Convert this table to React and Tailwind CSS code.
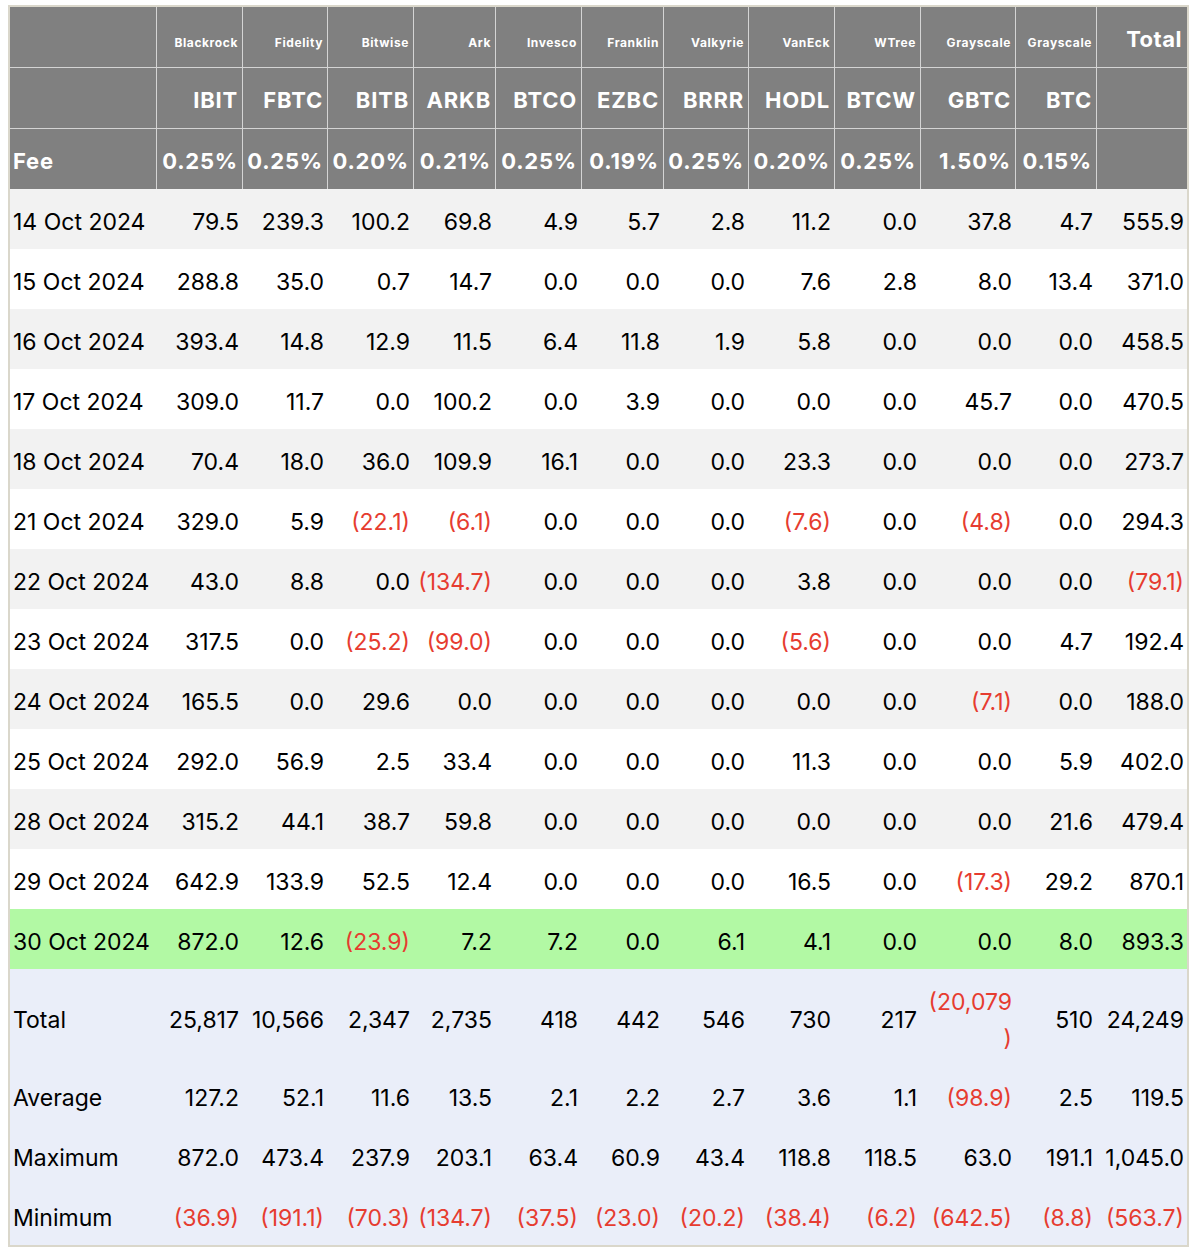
const cols = "grid grid-cols-[146px_85px_84px_85px_81px_85px_81px_84px_85px_85px_94px_80px_90px] gap-x-px";

const issuers = ["Blackrock", "Fidelity", "Bitwise", "Ark", "Invesco", "Franklin", "Valkyrie", "VanEck", "WTree", "Grayscale", "Grayscale"];
const tickers = ["IBIT", "FBTC", "BITB", "ARKB", "BTCO", "EZBC", "BRRR", "HODL", "BTCW", "GBTC", "BTC"];
const fees = ["0.25%", "0.25%", "0.20%", "0.21%", "0.25%", "0.19%", "0.25%", "0.20%", "0.25%", "1.50%", "0.15%"];

const rows = [
  ["14 Oct 2024", "79.5", "239.3", "100.2", "69.8", "4.9", "5.7", "2.8", "11.2", "0.0", "37.8", "4.7", "555.9"],
  ["15 Oct 2024", "288.8", "35.0", "0.7", "14.7", "0.0", "0.0", "0.0", "7.6", "2.8", "8.0", "13.4", "371.0"],
  ["16 Oct 2024", "393.4", "14.8", "12.9", "11.5", "6.4", "11.8", "1.9", "5.8", "0.0", "0.0", "0.0", "458.5"],
  ["17 Oct 2024", "309.0", "11.7", "0.0", "100.2", "0.0", "3.9", "0.0", "0.0", "0.0", "45.7", "0.0", "470.5"],
  ["18 Oct 2024", "70.4", "18.0", "36.0", "109.9", "16.1", "0.0", "0.0", "23.3", "0.0", "0.0", "0.0", "273.7"],
  ["21 Oct 2024", "329.0", "5.9", "(22.1)", "(6.1)", "0.0", "0.0", "0.0", "(7.6)", "0.0", "(4.8)", "0.0", "294.3"],
  ["22 Oct 2024", "43.0", "8.8", "0.0", "(134.7)", "0.0", "0.0", "0.0", "3.8", "0.0", "0.0", "0.0", "(79.1)"],
  ["23 Oct 2024", "317.5", "0.0", "(25.2)", "(99.0)", "0.0", "0.0", "0.0", "(5.6)", "0.0", "0.0", "4.7", "192.4"],
  ["24 Oct 2024", "165.5", "0.0", "29.6", "0.0", "0.0", "0.0", "0.0", "0.0", "0.0", "(7.1)", "0.0", "188.0"],
  ["25 Oct 2024", "292.0", "56.9", "2.5", "33.4", "0.0", "0.0", "0.0", "11.3", "0.0", "0.0", "5.9", "402.0"],
  ["28 Oct 2024", "315.2", "44.1", "38.7", "59.8", "0.0", "0.0", "0.0", "0.0", "0.0", "0.0", "21.6", "479.4"],
  ["29 Oct 2024", "642.9", "133.9", "52.5", "12.4", "0.0", "0.0", "0.0", "16.5", "0.0", "(17.3)", "29.2", "870.1"],
  ["30 Oct 2024", "872.0", "12.6", "(23.9)", "7.2", "7.2", "0.0", "6.1", "4.1", "0.0", "0.0", "8.0", "893.3"],
];

const summary = [
  ["Total", "25,817", "10,566", "2,347", "2,735", "418", "442", "546", "730", "217", "(20,079)", "510", "24,249"],
  ["Average", "127.2", "52.1", "11.6", "13.5", "2.1", "2.2", "2.7", "3.6", "1.1", "(98.9)", "2.5", "119.5"],
  ["Maximum", "872.0", "473.4", "237.9", "203.1", "63.4", "60.9", "43.4", "118.8", "118.5", "63.0", "191.1", "1,045.0"],
  ["Minimum", "(36.9)", "(191.1)", "(70.3)", "(134.7)", "(37.5)", "(23.0)", "(20.2)", "(38.4)", "(6.2)", "(642.5)", "(8.8)", "(563.7)"],
];

function Value({ v }) {
  const neg = v.startsWith("(");
  // the big GBTC total wraps in the original
  if (v === "(20,079)") {
    return (
      <span className="text-right text-[#e63c30]">
        (20,079
        <br />)
      </span>
    );
  }
  return <span className={neg ? "text-[#e63c30]" : ""}>{v}</span>;
}

function Row({ cells, bg, tall }) {
  return (
    <div className={`${cols} ${bg} ${tall ? "h-[96px]" : "h-[60px]"}`}>
      {cells.map((c, i) =>
        i === 0 ? (
          <div key={i} className="flex items-center pl-[3px] pt-[6px]">
            {c}
          </div>
        ) : (
          <div key={i} className="flex items-center justify-end pr-[3px] pt-[6px] leading-[36px]">
            <Value v={c} />
          </div>
        )
      )}
    </div>
  );
}

export default function App() {
  return (
    <div className="bg-white min-h-[1258px] pt-[5px] pl-[8px]">
      <div
        className="w-[1181px] border-2 border-[#dad7cb] text-[22px] text-black"
        style={{ fontFamily: "Inter, 'Liberation Sans', sans-serif" }}
      >
        {/* header block */}
        <div className={`${cols} gap-y-px bg-[#d4d4d4] text-white font-bold`}>
          <div className="h-[60px] bg-[#808080]" />
          {issuers.map((n, i) => (
            <div key={i} className="h-[60px] bg-[#808080] flex items-end justify-end pr-[4px] pb-[18px] text-[12px] leading-none tracking-[0.6px]">
              {n}
            </div>
          ))}
          <div className="h-[60px] bg-[#808080] flex items-end justify-end pr-[5px] pb-[17px] leading-none tracking-[0.5px]">
            Total
          </div>

          <div className="h-[60px] bg-[#808080]" />
          {tickers.map((t) => (
            <div key={t} className="h-[60px] bg-[#808080] flex items-center justify-end pr-[4px] pt-1 tracking-[0.8px]">
              {t}
            </div>
          ))}
          <div className="h-[60px] bg-[#808080]" />

          <div className="h-[60px] bg-[#808080] flex items-center pl-[3px] pt-1 tracking-[0.8px]">Fee</div>
          {fees.map((f, i) => (
            <div key={i} className="h-[60px] bg-[#808080] flex items-center justify-end pr-[4px] pt-1 tracking-[0.8px]">
              {f}
            </div>
          ))}
          <div className="h-[60px] bg-[#808080]" />
        </div>

        <div className="text-[23px]">
          {rows.map((r, i) => (
            <Row
              key={r[0]}
              cells={r}
              bg={i === rows.length - 1 ? "bg-[#b2f9a4]" : i % 2 === 0 ? "bg-[#f2f2f2]" : "bg-white"}
            />
          ))}

          {summary.map((r, i) => (
            <Row key={r[0]} cells={r} bg="bg-[#eaeef9]" tall={i === 0} />
          ))}
        </div>
      </div>
    </div>
  );
}
